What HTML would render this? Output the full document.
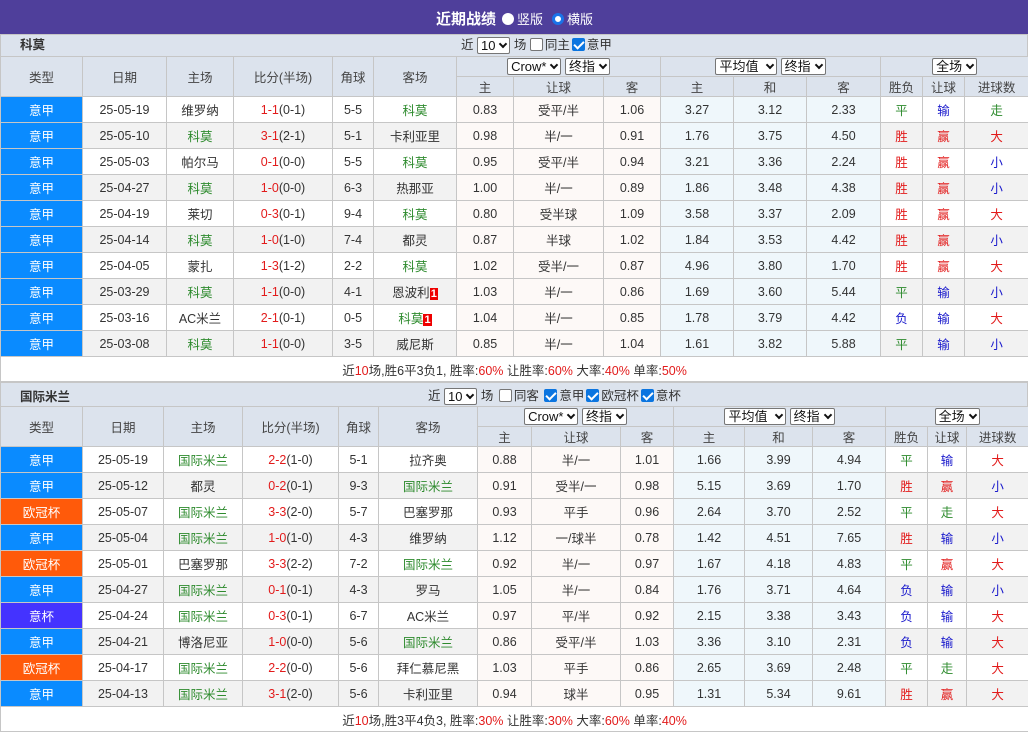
<!DOCTYPE html>
<html><head><meta charset="utf-8">
<style>
*{box-sizing:border-box;margin:0;padding:0}
body{width:1028px;height:732px;overflow:hidden;background:#fff;font-family:"Liberation Sans","Noto Sans CJK SC",sans-serif;font-size:12.5px;color:#333}
.top{height:34px;background:#4f3f9b;color:#fff;position:relative}
.top .t{position:absolute;left:436px;top:8px;font-size:15px;font-weight:bold}
.top .r{position:absolute;top:9px;font-size:13px}
.rad{display:inline-block;width:12px;height:12px;border-radius:50%;background:#fff;vertical-align:-1px;margin-right:3px}
.rad.on{background:#fff;border:3px solid #1a73e8;box-shadow:inset 0 0 0 2px #fff}
.sec{position:relative;height:22px;background:#dce3ed;border:1px solid #c6c6c6;border-bottom:none}
.sec .n{position:absolute;left:19px;top:3px;line-height:14px;font-weight:bold;font-size:12.5px;color:#333}
.sec .c{position:absolute;top:1px;line-height:18px;white-space:nowrap;font-size:12.5px}
.sel{display:inline-block;height:17px;line-height:15px;border:1px solid #767676;background:#fff;padding:0 3px;border-radius:2px;font-size:13px;color:#111;vertical-align:middle}
.sel i{display:inline-block;margin-left:5px;border:solid #111;border-width:0 2px 2px 0;width:6px;height:6px;transform:rotate(45deg);vertical-align:3px}
.cb{display:inline-block;width:13px;height:13px;border:1px solid #767676;border-radius:2px;background:#fff;vertical-align:-2px;margin:0 2px}
.cb.on{background:#0b75e0;border-color:#0b75e0;position:relative}
.cb.on:after{content:"";position:absolute;left:3px;top:0px;width:4px;height:8px;border:solid #fff;border-width:0 2px 2px 0;transform:rotate(45deg)}
table{border-collapse:collapse;table-layout:fixed;width:1028px}
td{border:1px solid #c6c6c6;text-align:center;height:26px;white-space:nowrap;overflow:hidden}
tr.h td{background:#dce3ed;height:20px;color:#444}
td.ty{color:#fff}
.yj{background:#0a8bff}.og{background:#ff5a0a}.yb{background:#4433ff}
.g{color:#2e8b2e}.rd{color:#e21b1b}.bl{color:#1a1acc}
tr.e td.w{background:#f2f2f2}
td.o{background:#fdf9f7}td.a{background:#eff7fb}
.rc{background:#e00;color:#fff;font-size:11px;font-weight:bold;padding:0 1px}
td.sum{height:25px;background:#fff;font-size:12.5px}
</style></head><body>
<div class="top"><span class="t">近期战绩</span><span class="r" style="left:502px"><span class="rad"></span>竖版</span><span class="r" style="left:552px"><span class="rad on"></span>横版</span></div>
<div class="sec"><span class="n">科莫</span><span class="c" style="left:460px">近 <span class="sel">10<i></i></span> 场 <span class="cb" style="margin-left:0"></span>同主<span class="cb on"></span>意甲</span></div>
<table id="t1"></table>
<div class="sec" style="height:24px"><span class="n" style="top:7px">国际米兰</span><span class="c" style="left:427px;top:4px">近 <span class="sel">10<i></i></span> 场 <span class="cb"></span>同客 <span class="cb on"></span>意甲<span class="cb on"></span>欧冠杯<span class="cb on"></span>意杯</span></div>
<table id="t2"></table>
<script>
function col(c){return {'平':'g','走':'g','胜':'rd','赢':'rd','大':'rd','负':'bl','输':'bl','小':'bl'}[c]}
function build(id,w,team,data,sum){
var h='<colgroup>'+w.map(x=>'<col style="width:'+x+'px">').join('')+'</colgroup>';
h+='<tr class="h"><td rowspan=2>类型</td><td rowspan=2>日期</td><td rowspan=2>主场</td><td rowspan=2>比分(半场)</td><td rowspan=2>角球</td><td rowspan=2>客场</td>'+
'<td colspan=3><span class="sel">Crow*<i></i></span> <span class="sel">终指<i></i></span></td><td colspan=3><span class="sel">平均值 <i></i></span> <span class="sel">终指<i></i></span></td><td colspan=3><span class="sel">全场<i></i></span></td></tr>';
h+='<tr class="h"><td>主</td><td>让球</td><td>客</td><td>主</td><td>和</td><td>客</td><td>胜负</td><td>让球</td><td>进球数</td></tr>';
data.forEach((r,i)=>{
var d=r.split(' ');var ty=d[0];var cls=ty=='意甲'?'yj':ty=='欧冠杯'?'og':'yb';
function tm(s){var rc='';if(s.endsWith('*')){s=s.slice(0,-1);rc='<span class="rc">1</span>'}return '<span class="'+(s==team?'g':'')+'">'+s+'</span>'+rc}
var sc=d[3].split('(');
h+='<tr class="'+(i%2?'e':'')+'"><td class="ty '+cls+'">'+ty+'</td><td class="w">'+d[1]+'</td><td class="w">'+tm(d[2])+'</td><td class="w"><span class="rd">'+sc[0]+'</span>('+sc[1]+'</td><td class="w">'+d[4]+'</td><td class="w">'+tm(d[5])+'</td>'+
'<td class="o">'+d[6]+'</td><td class="o">'+d[7]+'</td><td class="o">'+d[8]+'</td><td class="a">'+d[9]+'</td><td class="a">'+d[10]+'</td><td class="a">'+d[11]+'</td>'+
'<td class="w '+col(d[12])+'">'+d[12]+'</td><td class="w '+col(d[13])+'">'+d[13]+'</td><td class="w '+col(d[14])+'">'+d[14]+'</td></tr>';});
h+='<tr><td class="sum" colspan=15>'+sum+'</td></tr>';
document.getElementById(id).innerHTML=h;}
build('t1',[82,84,67,99,41,83,57,90,57,73,73,74,42,42,64],'科莫',[
'意甲 25-05-19 维罗纳 1-1(0-1) 5-5 科莫 0.83 受平/半 1.06 3.27 3.12 2.33 平 输 走',
'意甲 25-05-10 科莫 3-1(2-1) 5-1 卡利亚里 0.98 半/一 0.91 1.76 3.75 4.50 胜 赢 大',
'意甲 25-05-03 帕尔马 0-1(0-0) 5-5 科莫 0.95 受平/半 0.94 3.21 3.36 2.24 胜 赢 小',
'意甲 25-04-27 科莫 1-0(0-0) 6-3 热那亚 1.00 半/一 0.89 1.86 3.48 4.38 胜 赢 小',
'意甲 25-04-19 莱切 0-3(0-1) 9-4 科莫 0.80 受半球 1.09 3.58 3.37 2.09 胜 赢 大',
'意甲 25-04-14 科莫 1-0(1-0) 7-4 都灵 0.87 半球 1.02 1.84 3.53 4.42 胜 赢 小',
'意甲 25-04-05 蒙扎 1-3(1-2) 2-2 科莫 1.02 受半/一 0.87 4.96 3.80 1.70 胜 赢 大',
'意甲 25-03-29 科莫 1-1(0-0) 4-1 恩波利* 1.03 半/一 0.86 1.69 3.60 5.44 平 输 小',
'意甲 25-03-16 AC米兰 2-1(0-1) 0-5 科莫* 1.04 半/一 0.85 1.78 3.79 4.42 负 输 大',
'意甲 25-03-08 科莫 1-1(0-0) 3-5 威尼斯 0.85 半/一 1.04 1.61 3.82 5.88 平 输 小'],
'近<span class="rd">10</span>场,胜6平3负1, 胜率:<span class="rd">60%</span> 让胜率:<span class="rd">60%</span> 大率:<span class="rd">40%</span> 单率:<span class="rd">50%</span>');
build('t2',[82,81,79,96,40,99,54,89,53,71,68,73,42,39,62],'国际米兰',[
'意甲 25-05-19 国际米兰 2-2(1-0) 5-1 拉齐奥 0.88 半/一 1.01 1.66 3.99 4.94 平 输 大',
'意甲 25-05-12 都灵 0-2(0-1) 9-3 国际米兰 0.91 受半/一 0.98 5.15 3.69 1.70 胜 赢 小',
'欧冠杯 25-05-07 国际米兰 3-3(2-0) 5-7 巴塞罗那 0.93 平手 0.96 2.64 3.70 2.52 平 走 大',
'意甲 25-05-04 国际米兰 1-0(1-0) 4-3 维罗纳 1.12 一/球半 0.78 1.42 4.51 7.65 胜 输 小',
'欧冠杯 25-05-01 巴塞罗那 3-3(2-2) 7-2 国际米兰 0.92 半/一 0.97 1.67 4.18 4.83 平 赢 大',
'意甲 25-04-27 国际米兰 0-1(0-1) 4-3 罗马 1.05 半/一 0.84 1.76 3.71 4.64 负 输 小',
'意杯 25-04-24 国际米兰 0-3(0-1) 6-7 AC米兰 0.97 平/半 0.92 2.15 3.38 3.43 负 输 大',
'意甲 25-04-21 博洛尼亚 1-0(0-0) 5-6 国际米兰 0.86 受平/半 1.03 3.36 3.10 2.31 负 输 大',
'欧冠杯 25-04-17 国际米兰 2-2(0-0) 5-6 拜仁慕尼黑 1.03 平手 0.86 2.65 3.69 2.48 平 走 大',
'意甲 25-04-13 国际米兰 3-1(2-0) 5-6 卡利亚里 0.94 球半 0.95 1.31 5.34 9.61 胜 赢 大'],
'近<span class="rd">10</span>场,胜3平4负3, 胜率:<span class="rd">30%</span> 让胜率:<span class="rd">30%</span> 大率:<span class="rd">60%</span> 单率:<span class="rd">40%</span>');
</script>
</body></html>
